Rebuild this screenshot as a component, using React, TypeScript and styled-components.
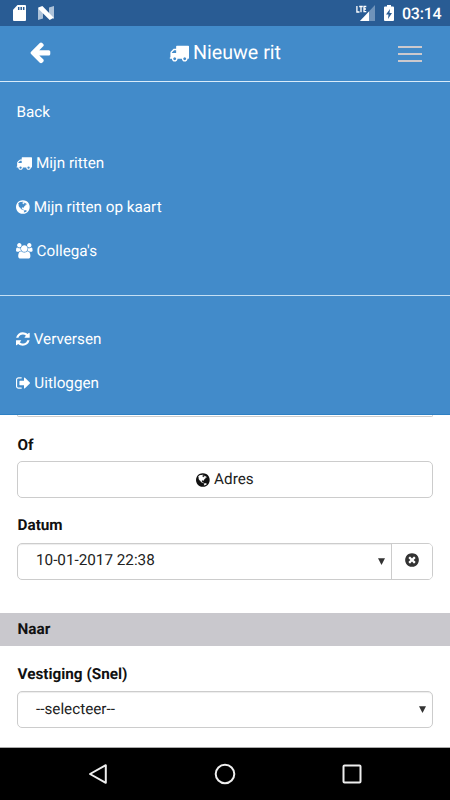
import React from "react";
import styled, { createGlobalStyle } from "styled-components";

const Global = createGlobalStyle`
  * { box-sizing: border-box; }
  html, body { margin: 0; padding: 0; background: #fff; }
  body { font-family: Roboto, "Liberation Sans", sans-serif; font-size: 15.25px; color: #111; overflow: hidden; text-rendering: geometricPrecision; }
`;

const Screen = styled.div`
  width: 450px;
  height: 800px;
  display: flex;
  flex-direction: column;
  overflow: hidden;
  background: #fff;
`;

const StatusBar = styled.div`
  height: 26px;
  flex: none;
  background: #295c94;
  color: #fff;
  display: flex;
  align-items: center;
  padding: 0 8.5px 0 13px;
`;

const StatusIcon = styled.svg<{ $gap: number }>`
  display: block;
  flex: none;
  margin-right: ${(p) => p.$gap}px;
`;

const Spacer = styled.div`
  flex: 1;
`;

const Clock = styled.span`
  font-size: 16px;
  font-weight: 500;
  line-height: 26px;
  letter-spacing: -0.2px;
  padding-top: 2px;
`;

const Header = styled.header`
  height: 56px;
  flex: none;
  display: grid;
  grid-template-columns: 52px 1fr 52px;
  align-items: center;
  background: #428bca;
  border-bottom: 1px solid #d9ecfa;
  color: #fff;
  padding-bottom: 3px;
`;

const BackButton = styled.button`
  border: 0;
  background: none;
  padding: 0;
  color: inherit;
  display: flex;
  justify-content: flex-end;
`;

const Title = styled.h1`
  margin: 0;
  display: flex;
  align-items: center;
  justify-content: center;
  gap: 4px;
  font-size: 19.7px;
  font-weight: 400;
  line-height: 26px;
  padding-top: 2px;

  > svg {
    margin-bottom: 1px;
  }
`;

const Burger = styled.button`
  border: 0;
  background: none;
  padding: 3px 0 0;
  display: flex;
  flex-direction: column;
  gap: 5px;
`;

const BurgerLine = styled.span`
  width: 24px;
  height: 2px;
  background: #ccc9cd;
`;

const Menu = styled.nav`
  flex: none;
  height: 333px;
  background: #428bca;
  color: #fff;
  border-bottom: 1px solid #2d80c4;
`;

const MenuGroup = styled.div<{ $height: number; $top: number; $divided?: boolean }>`
  height: ${(p) => p.$height}px;
  padding: ${(p) => p.$top}px 16px 0;
  border-bottom: ${(p) => (p.$divided ? "1px solid #c4dff4" : "0")};
`;

const MenuItem = styled.div<{ $gap?: number; $indent?: number }>`
  height: 44px;
  display: flex;
  align-items: center;
  gap: ${(p) => p.$gap ?? 4}px;
  padding-left: ${(p) => p.$indent ?? 0}px;
  line-height: 20px;
`;

const Form = styled.main`
  flex: 1;
  min-height: 0;
  overflow: hidden;
  border-bottom: 1px solid #aaa;
`;

const ClippedField = styled.div`
  height: 2px;
  margin: 0 17px;
  border: 1px solid #ccc;
  border-top: 0;
  border-radius: 0 0 4px 4px;
`;

const Label = styled.label<{ $top: number; $height?: number }>`
  display: block;
  margin: ${(p) => p.$top}px 17.5px 0;
  height: ${(p) => p.$height ?? 27}px;
  font-size: 15.3px;
  font-weight: 700;
  line-height: 20px;
`;

const Field = styled.div<{ $center?: boolean }>`
  margin: 0 17px;
  height: 37px;
  border: 1px solid #ccc;
  border-radius: 5px;
  display: flex;
  align-items: center;
  justify-content: ${(p) => (p.$center ? "center" : "space-between")};
  gap: 4px;
  padding-left: ${(p) => (p.$center ? 0 : 18)}px;
  box-shadow: ${(p) => (p.$center ? "none" : "inset 0 1px 1px rgba(0, 0, 0, 0.075)")};
`;

const Value = styled.span<{ $lift?: number }>`
  line-height: 20px;
  color: #222;
  padding-bottom: ${(p) => p.$lift ?? 0}px;
`;

const Grow = styled(Value)`
  flex: 1;
`;

const Caret = styled.svg<{ $right: number }>`
  display: block;
  margin-right: ${(p) => p.$right}px;
`;

const ClearButton = styled.button`
  width: 41px;
  height: 35px;
  border: 0;
  border-left: 1px solid #ccc;
  border-radius: 0 4px 4px 0;
  background: #fff;
  color: #333;
  padding: 0 0 3px;
  display: flex;
  align-items: center;
  justify-content: center;
`;

const SectionTitle = styled.h2`
  margin: 33px 0 0;
  height: 33px;
  padding: 0 17.5px;
  background: #c9c8cd;
  font-size: 15.3px;
  font-weight: 700;
  line-height: 33px;
`;

const NavBar = styled.footer`
  height: 52px;
  flex: none;
  background: #000;
  display: grid;
  grid-template-columns: repeat(3, 127px);
  justify-content: center;
  align-items: center;
  justify-items: center;
`;

const Glyph = styled.svg<{ $shift?: number }>`
  display: block;
  flex: none;
  fill: currentColor;
  margin-left: ${(p) => p.$shift ?? 0}px;
`;

const glyphs = {
  arrow: {
    box: "0 0 1792 1792",
    d: "M1664 896v128q0 53-32.5 90.5t-84.5 37.5h-704l293 294q38 36 38 90t-38 90l-75 76q-37 37-90 37-52 0-91-37l-651-652q-37-37-37-90 0-52 37-91l651-650q38-38 91-38 52 0 90 38l75 74q38 38 38 91t-38 91l-293 293h704q52 0 84.5 37.5t32.5 90.5z",
  },
  truck: {
    box: "0 0 1792 1792",
    d: "M640 1408q0-52-38-90t-90-38-90 38-38 90 38 90 90 38 90-38 38-90zm-384-512h384v-256h-158q-13 0-22 9l-195 195q-9 9-9 22v30zm1280 512q0-52-38-90t-90-38-90 38-38 90 38 90 90 38 90-38 38-90zm256-1088v1024q0 15-4 26.5t-13.5 18.5-16.5 11.5-23.5 6-22.5 2-25.5 0-22.5-.5q0 106-75 181t-181 75-181-75-75-181h-384q0 106-75 181t-181 75-181-75-75-181h-64q-3 0-22.5.5t-25.5 0-22.5-2-23.5-6-16.5-11.5-13.5-18.5-4-26.5q0-26 19-45t45-19v-320q0-8-.5-35t0-38 2.5-34.5 6.5-37 14-30.5 22.5-30l198-198q19-19 50.5-32t58.5-13h160v-192q0-26 19-45t45-19h1024q26 0 45 19t19 45z",
  },
  users: {
    box: "0 0 1920 1792",
    d: "M593 896q-162 5-265 128h-134q-82 0-138-40.5t-56-118.5q0-353 124-353 6 0 43.5 21t97.5 42.5 119 21.5q67 0 133-23-5 37-5 66 0 139 81 256zm1071 637q0 120-73 189.5t-194 69.5h-874q-121 0-194-69.5t-73-189.5q0-53 3.5-103.5t14-109 26.5-108.5 43-97.5 62-81 85.5-53.5 111.5-20q10 0 43 21.5t73 48 107 48 135 21.5 135-21.5 107-48 73-48 43-21.5q61 0 111.5 20t85.5 53.5 62 81 43 97.5 26.5 108.5 14 109 3.5 103.5zm-1024-1277q0 106-75 181t-181 75-181-75-75-181 75-181 181-75 181 75 75 181zm704 384q0 159-112.5 271.5t-271.5 112.5-271.5-112.5-112.5-271.5 112.5-271.5 271.5-112.5 271.5 112.5 112.5 271.5zm576 225q0 78-56 118.5t-138 40.5h-134q-103-123-265-128 81-117 81-256 0-29-5-66 66 23 133 23 59 0 119-21.5t97.5-42.5 43.5-21q124 0 124 353zm-128-609q0 106-75 181t-181 75-181-75-75-181 75-181 181-75 181 75 75 181z",
  },
  refresh: {
    box: "128 0 1536 1792",
    d: "M1639 1056q0 5-1 7-64 268-268 434.5t-478 166.5q-146 0-282.5-55t-243.5-157l-129 129q-19 19-45 19t-45-19-19-45v-448q0-26 19-45t45-19h448q26 0 45 19t19 45-19 45l-137 137q71 66 161 102t187 36q134 0 250-65t186-179q11-17 53-117 8-23 30-23h192q13 0 22.5 9.5t9.5 22.5zm25-800v448q0 26-19 45t-45 19h-448q-26 0-45-19t-19-45 19-45l138-138q-148-137-349-137-134 0-250 65t-186 179q-11 17-53 117-8 23-30 23h-199q-13 0-22.5-9.5t-9.5-22.5v-7q65-268 270-434.5t480-166.5q146 0 284 55.5t245 156.5l130-129q19-19 45-19t45 19 19 45z",
  },
  signOut: {
    box: "64 0 1664 1792",
    d: "M704 1440q0 4 1 20t.5 26.5-3 23.5-10 19.5-20.5 6.5h-320q-119 0-203.5-84.5t-84.5-203.5v-704q0-119 84.5-203.5t203.5-84.5h320q13 0 22.5 9.5t9.5 22.5q0 4 1 20t.5 26.5-3 23.5-10 19.5-20.5 6.5h-320q-66 0-113 47t-47 113v704q0 66 47 113t113 47h312l11.5 1 11.5 3 8 5.5 7 9 2 13.5zm928-544q0 26-19 45l-544 544q-19 19-45 19t-45-19-19-45v-288h-448q-26 0-45-19t-19-45v-384q0-26 19-45t45-19h448v-288q0-26 19-45t45-19 45 19l544 544q19 19 19 45z",
  },
  clear: {
    box: "0 0 1792 1792",
    d: "M1277 1122q0-26-19-45l-181-181 181-181q19-19 19-45 0-27-19-46l-90-90q-19-19-46-19-26 0-45 19l-181 181-181-181q-19-19-45-19-27 0-46 19l-90 90q-19 19-19 46 0 26 19 45l181 181-181 181q-19 19-19 45 0 27 19 46l90 90q19 19 46 19 26 0 45-19l181-181 181 181q19 19 45 19 27 0 46-19l90-90q19-19 19-46zm387-226q0 209-103 385.5t-279.5 279.5-385.5 103-385.5-103-279.5-279.5-103-385.5 103-385.5 279.5-279.5 385.5-103 385.5 103 279.5 279.5 103 385.5z",
  },
  globe: {
    box: "0 0 1536 1792",
    d: "M768 128q209 0 385.5 103t279.5 279.5 103 385.5-103 385.5-279.5 279.5-385.5 103-385.5-103-279.5-279.5-103-385.5 103-385.5 279.5-279.5 385.5-103zm274 521q-2 1-9.5 9.5t-13.5 9.5q2 0 4.5-5t5-11 3.5-7q6-7 22-15 14-6 52-12 34-8 51 11-2-2 9.5-13t14.5-12q3-2 15-4.5t15-7.5l2-22q-12 1-17.5-7t-6.5-21q0 2-6 8 0-7-4.5-8t-11.5 1-9 1q-10-3-15-7.5t-8-16.5-4-15q-2-5-9.5-11t-9.5-10q-1-2-2.5-5.5t-3-6.5-4-5.5-5.5-2.5-7 5-7.5 10-4.5 5q-3-2-6-1.5t-4.5 1-4.5 3-5 3.5q-3 2-8.5 3t-8.5 2q15-5-1-11-10-4-16-3 9-4 7.5-12t-8.5-14h5q-1-4-8.5-8.5t-17.5-8.5-13-6q-8-5-34-9.5t-33-.5q-5 6-4.5 10.5t4 14 3.5 12.5q1 6-5.5 13t-6.5 12q0 7 14 15.5t10 21.5q-3 8-16 16t-16 12q-5 8-1.5 18.5t10.5 16.5q2 2 1.5 4t-3.5 4.5-5.5 4-6.5 3.5l-3 2q-11 5-20.5-6t-13.5-26q-7-25-16-30-23-8-29 1-5-13-41-26-25-9-58-4 6-1 0-15-7-15-19-12 3-6 4-17.5t1-13.5q3-13 12-23 1-1 7-8.5t9.5-13.5.5-6q35 4 50-11 5-5 11.5-17t10.5-17q9-6 14-5.5t14.5 5.5 14.5 5q14 1 15.5-11t-7.5-20q12 1 3-17-4-7-8-9-12-4-27 5-8 4 2 8-1-1-9.5 10.5t-16.5 17.5-16-5q-1-1-5.5-13.5t-9.5-13.5q-8 0-16 15 3-8-11-15t-24-8q19-12-8-27-7-4-20.5-5t-19.5 4q-5 7-5.5 11.5t5 8 10.5 5.5 11.5 4 8.5 3q14 10 8 14-2 1-8.5 3.5t-11.5 4.5-6 4q-3 4 0 14t-2 14q-5-5-9-17.5t-7-16.5q7 9-25 6l-10-1q-4 0-16 2t-20.5 1-13.5-8q-4-8 0-20 1-4 4-2-4-3-11-9.5t-10-8.5q-46 15-94 41 6 1 12-1 5-2 13-6.5t10-5.5q34-14 42-7l5-5q14 16 20 25-7-4-30-1-20 6-22 12 7 12 5 18-4-3-11.5-10t-14.5-11-15-5q-16 0-22 1-146 80-235 222 7 7 12 8 4 1 5 9t2.5 11 11.5-3q9 8 3 19 1-1 44 27 19 17 21 21 3 11-10 18-1-2-9-9t-9-4q-3 5 .5 18.5t10.5 12.5q-7 0-9.5 16t-2.5 35.5-1 23.5l2 1q-3 12 5.5 34.5t21.5 19.5q-13 3 20 43 6 8 8 9 3 2 12 7.5t15 10 10 10.5q4 5 10 22.5t14 23.5q-2 6 9.5 20t10.5 23q-1 0-2.5 1t-2.5 1q3 7 15.5 14t15.5 13q1 3 2 10t3 11 8 2q2-20-24-62-15-25-17-29-3-5-5.5-15.5t-4.5-14.5q2 0 6 1.5t8.5 3.5 7.5 4 2 3q-3 7 2 17.5t12 18.5 17 19 12 13q6 6 14 19.5t0 13.5q9 0 20 10.5t17 19.5q5 8 8 26t5 24q2 7 8.5 13.5t12.5 9.5l16 8 13 7q5 2 18.5 10.5t21.5 11.5q10 4 16 4t14.5-2.5 13.5-3.5q15-2 29 15t21 21q36 19 55 11-2 1 .5 7.5t8 15.5 9 14.5 5.5 8.5q5 6 18 15t18 15q6-4 7-9-3 8 7 20t18 10q14-3 14-32-31 15-49-18 0-1-2.5-5.5t-4-8.5-2.5-8.5 0-7.5 5-3q9 0 10-3.5t-2-12.5-4-13q-1-8-11-20t-12-15q-5 9-16 8t-16-9q0 1-1.5 5.5t-1.5 6.5q-13 0-15-1 1-3 2.5-17.5t3.5-22.5q1-4 5.5-12t7.5-14.5 4-12.5-4.5-9.5-17.5-2.5q-19 1-26 20-1 3-3 10.5t-5 11.5-9 7q-7 3-24 2t-24-5q-13-8-22.5-29t-9.5-37q0-10 2.5-26.5t3-25-5.5-24.5q3-2 9-9.5t10-10.5q2-1 4.5-1.5t4.5 0 4-1.5 3-6q-1-1-4-3-3-3-4-3 7 3 28.5-1.5t27.5 1.5q15 11 22-2 0-1-2.5-9.5t-.5-13.5q5 27 29 9 3 3 15.5 5t17.5 5q3 2 7 5.5t5.5 4.5 5-.5 8.5-6.5q10 14 12 24 11 40 19 44 7 3 11 2t4.5-9.5 0-14-1.5-12.5l-1-8v-18l-1-8q-15-3-18.5-12t1.5-18.5 15-18.5q1-1 8-3.5t15.5-6.5 12.5-8q21-19 15-35 7 0 11-9-1 0-5-3t-7.5-5-4.5-2q9-5 2-16 5-3 7.5-11t7.5-10q9 12 21 2 7-8 1-16 5-7 20.5-10.5t18.5-9.5q7 2 8-2t1-12 3-12q4-5 15-9t13-5l17-11q3-4 0-4 18 2 31-11 10-11-6-20 3-6-3-9.5t-15-5.5q3-1 11.5-.5t10.5-1.5q15-10-7-16-17-5-43 12zm-163 877q206-36 351-189-3-3-12.5-4.5t-12.5-3.5q-18-7-24-8 1-7-2.5-13t-8-9-12.5-8-11-7q-2-2-7-6t-7-5.5-7.5-4.5-8.5-2-10 1l-3 1q-3 1-5.5 2.5t-5.5 3-4 3 0 2.5q-21-17-36-22-5-1-11-5.5t-10.5-7-10-1.5-11.5 7q-5 5-6 15t-2 13q-7-5 0-17.5t2-18.5q-3-6-10.5-4.5t-12 4.5-11.5 8.5-9 6.5-8.5 5.5-8.5 7.5q-3 4-6 12t-5 11q-2-4-11.5-6.5t-9.5-5.5q2 10 4 35t5 38q7 31-12 48-27 25-29 40-4 22 12 26 0 7-8 20.5t-7 21.5q0 6 2 16z",
  },
};

function Icon({ name, size, shift }: { name: keyof typeof glyphs; size: number; shift?: number }) {
  const { box, d } = glyphs[name];
  const width = (size * Number(box.split(" ")[2])) / 1792;
  return (
    <Glyph $shift={shift} width={width} height={size} viewBox={box}>
      <path d={d} />
    </Glyph>
  );
}

function DownCaret({ right }: { right: number }) {
  return (
    <Caret $right={right} width="7" height="7" viewBox="0 0 7 7">
      <path d="M0 .3h7L3.5 7z" fill="#333" />
    </Caret>
  );
}

export default function App() {
  return (
    <Screen>
      <Global />
      <StatusBar>
        <StatusIcon $gap={12} width="13" height="16" viewBox="0 0 13 16">
          <path d="M4.5 0H12a1 1 0 0 1 1 1v14a1 1 0 0 1-1 1H1a1 1 0 0 1-1-1V4.7z" fill="#fff" />
          <path d="M5.7 2v3M8.2 2v3M10.7 2v3" stroke="#295c94" strokeWidth="1.5" />
        </StatusIcon>
        <StatusIcon $gap={0} width="16" height="14" viewBox="0 0 16 14">
          <path d="M0 1l5 3v8.5L0 14zM11 1.5L16 0v13l-5-3z" fill="#adc2d9" />
          <path d="M1 1.2L4.4 0 15.7 11.8 11.7 14 0.5 3z" fill="#fff" />
        </StatusIcon>
        <Spacer />
        <StatusIcon $gap={8} width="20" height="16" viewBox="0 0 20 16">
          <path d="M19 0v16H4z" fill="#6f93ba" />
          <path d="M13 6.5V16H4z" fill="#fff" />
          <rect width="11" height="8" fill="#295c94" />
          <path d="M.9 1v6H3.5M3.2 1.5h3.6M5 1.5V7.2M10.3 1.5H8v5.1h2.3M8 4h2" fill="none" stroke="#fff" strokeWidth="1.3" />
        </StatusIcon>
        <StatusIcon $gap={8} width="10" height="16" viewBox="0 0 10 16">
          <path d="M3 0h4v1.5h2a1 1 0 0 1 1 1V15a1 1 0 0 1-1 1H1a1 1 0 0 1-1-1V2.5a1 1 0 0 1 1-1h2z" fill="#fff" />
          <path d="M6 4L2 9.5h2.500L4 14l4-6H5.500z" fill="#295c94" />
        </StatusIcon>
        <Clock>03:14</Clock>
      </StatusBar>
      <Header>
        <BackButton aria-label="Terug">
          <Icon name="arrow" size={24} />
        </BackButton>
        <Title>
          <Icon name="truck" size={20} />
          Nieuwe rit
        </Title>
        <Burger aria-label="Menu">
          <BurgerLine />
          <BurgerLine />
          <BurgerLine />
        </Burger>
      </Header>
      <Menu>
        <MenuGroup $height={59} $top={8}>
          <MenuItem $indent={0.5}>Back</MenuItem>
        </MenuGroup>
        <MenuGroup $height={155} $top={0} $divided>
          <MenuItem>
            <Icon name="truck" size={16} />
            Mijn ritten
          </MenuItem>
          <MenuItem>
            <Icon name="globe" size={16} />
            Mijn ritten op kaart
          </MenuItem>
          <MenuItem $gap={4}>
            <Icon name="users" size={15.5} />
            Collega's
          </MenuItem>
        </MenuGroup>
        <MenuGroup $height={118} $top={21}>
          <MenuItem $gap={4}>
            <Icon name="refresh" size={16} />
            Verversen
          </MenuItem>
          <MenuItem $gap={4}>
            <Icon name="signOut" size={16} shift={-0.5} />
            Uitloggen
          </MenuItem>
        </MenuGroup>
      </Menu>
      <Form>
        <ClippedField />
        <Label $top={18} $height={26}>
          Of
        </Label>
        <Field $center>
          <Icon name="globe" size={16} />
          <Value $lift={1}>Adres</Value>
        </Field>
        <Label $top={17} $height={28}>
          Datum
        </Label>
        <Field>
          <Grow $lift={4}>10-01-2017 22:38</Grow>
          <DownCaret right={2} />
          <ClearButton aria-label="Wissen">
            <Icon name="clear" size={16} />
          </ClearButton>
        </Field>
        <SectionTitle>Naar</SectionTitle>
        <Label $top={18}>Vestiging (Snel)</Label>
        <Field>
          <Grow $lift={1}>--selecteer--</Grow>
          <DownCaret right={6} />
        </Field>
      </Form>
      <NavBar>
        <Glyph width="22" height="22" viewBox="0 0 22 22">
          <path d="M18.8 2.2v17.6L3 11z" fill="none" stroke="#eee" strokeWidth="2" strokeLinejoin="round" />
        </Glyph>
        <Glyph width="22" height="22" viewBox="0 0 22 22">
          <circle cx="11" cy="11" r="9.3" fill="none" stroke="#eee" strokeWidth="2" />
        </Glyph>
        <Glyph width="22" height="22" viewBox="0 0 22 22">
          <rect x="2.5" y="2.5" width="17" height="17" rx="1" fill="none" stroke="#eee" strokeWidth="2" />
        </Glyph>
      </NavBar>
    </Screen>
  );
}
